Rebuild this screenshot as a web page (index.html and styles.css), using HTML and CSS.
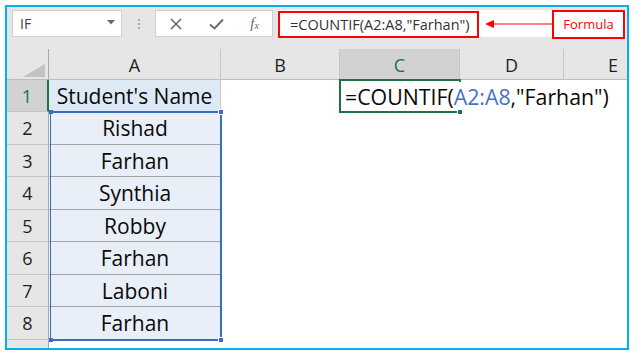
FILE: index.html
```html
<!DOCTYPE html>
<html>
<head>
<meta charset="utf-8">
<link rel="stylesheet" href="styles.css">
</head>
<body>
<div class="frame">
  <div class="toolbar">
    <div class="namebox">
      <span class="nb-text">IF</span>
      <svg class="nb-caret" width="8" height="5" viewBox="0 0 8 5"><path d="M0 0H8L4 4.5Z" fill="#6a6a6a"/></svg>
    </div>
    <div class="grip"><i></i><i></i><i></i></div>
    <div class="fxbox">
      <svg width="14" height="14" viewBox="0 0 14 14"><path d="M2 2L12 12M12 2L2 12" stroke="#6a6a6a" stroke-width="1.6" fill="none"/></svg>
      <svg width="15" height="12" viewBox="0 0 15 12"><path d="M1 6.5L5.5 10.5L14 1.5" stroke="#6a6a6a" stroke-width="1.9" fill="none"/></svg>
      <span class="fx">f<sub>x</sub></span>
    </div>
    <div class="formula">
      <span class="ftext">=COUNTIF(A2:A8,"Farhan")</span>
      <svg class="arrow" width="73" height="10" viewBox="0 0 73 10"><path d="M14 5H73" stroke="#ff0000" stroke-width="1"/><path d="M6 5L15 1V9Z" fill="#ff0000"/></svg>
      <span class="label">Formula</span>
    </div>
  </div>
  <div class="sheet">
    <div class="corner"><svg width="22" height="13" viewBox="0 0 22 13"><path d="M22 0V13H0Z" fill="#c2c2c2"/></svg></div>
    <div class="ch">A</div>
    <div class="ch">B</div>
    <div class="ch ch-active">C</div>
    <div class="ch">D</div>
    <div class="ch ch-last">E</div>

    <div class="rh rh-active">1</div>
    <div class="ca ca-head">Student's Name</div>
    <div class="ce"></div>
    <div class="ce active-cell"><span class="cell-formula">=COUNTIF(<span class="ref">A2:A8</span>,"Farhan")</span><i class="fill-handle"></i></div>
    <div class="ce"></div>
    <div class="ce"></div>

    <div class="rh">2</div><div class="ca">Rishad</div><div class="ce"></div><div class="ce"></div><div class="ce"></div><div class="ce"></div>
    <div class="rh">3</div><div class="ca">Farhan</div><div class="ce"></div><div class="ce"></div><div class="ce"></div><div class="ce"></div>
    <div class="rh">4</div><div class="ca">Synthia</div><div class="ce"></div><div class="ce"></div><div class="ce"></div><div class="ce"></div>
    <div class="rh">5</div><div class="ca">Robby</div><div class="ce"></div><div class="ce"></div><div class="ce"></div><div class="ce"></div>
    <div class="rh">6</div><div class="ca">Farhan</div><div class="ce"></div><div class="ce"></div><div class="ce"></div><div class="ce"></div>
    <div class="rh">7</div><div class="ca">Laboni</div><div class="ce"></div><div class="ce"></div><div class="ce"></div><div class="ce"></div>
    <div class="rh">8</div><div class="ca">Farhan</div><div class="ce"></div><div class="ce"></div><div class="ce"></div><div class="ce"></div>
    <div class="rh rh-tail"></div><div class="ce"></div><div class="ce"></div><div class="ce"></div><div class="ce"></div><div class="ce"></div>

    <div class="range">
      <i class="h h-tl"></i><i class="h h-tr"></i><i class="h h-bl"></i><i class="h h-br"></i>
    </div>
  </div>
</div>
</body>
</html>
```
FILE: styles.css
```css
* { box-sizing: border-box; }
html, body { margin: 0; padding: 0; background: #ffffff; }
body { font-family: "Open Sans", "Noto Sans", sans-serif; }

.frame {
  margin: 5px 0 0 5px;
  width: 624px;
  height: 345px;
  border: 2px solid #00b0f0;
  display: flex;
  flex-direction: column;
  overflow: hidden;
}

.toolbar {
  height: 42px;
  flex: none;
  background: #e6e6e6;
  display: flex;
  align-items: flex-start;
  padding: 3px 1px 0 5px;
}

.namebox {
  width: 110px;
  height: 27px;
  background: #fff;
  border: 1px solid #d0d0d0;
  display: flex;
  align-items: center;
  justify-content: space-between;
  padding: 0 6px 0 7px;
}
.nb-text { font-size: 14px; color: #444; }
.nb-caret { margin-top: -3px; }

.grip {
  width: 33px;
  height: 27px;
  display: flex;
  flex-direction: column;
  justify-content: center;
  gap: 2px;
  padding-left: 16px;
}
.grip i { display: block; width: 2px; height: 2px; background: #a8a8a8; }

.fxbox {
  width: 118px;
  height: 27px;
  background: #fff;
  border: 1px solid #d0d0d0;
  display: flex;
  align-items: center;
  justify-content: space-around;
}
.fx {
  font-family: "Liberation Serif", serif;
  font-style: italic;
  font-size: 15px;
  color: #6a6a6a;
  line-height: 1;
}
.fx sub { font-size: 10px; vertical-align: -1px; }

.formula {
  flex: 1;
  margin-left: 5px;
  height: 27px;
  background: #fff;
  display: flex;
  align-items: flex-start;
}
.ftext {
  width: 201px;
  height: 27px;
  margin-top: 1px;
  border: 2px solid #ff0000;
  padding-left: 10px;
  font-size: 14.5px;
  line-height: 23px;
  color: #333;
  white-space: nowrap;
}
.arrow { margin-top: 9px; }
.label {
  width: 73px;
  height: 29px;
  border: 2px solid #ff0000;
  color: #ff0000;
  font-size: 13px;
  line-height: 25px;
  text-align: center;
  background: #fff;
}

.sheet {
  flex: 1;
  position: relative;
  display: grid;
  grid-template-columns: 42px 172px 119px 120px 104px 98px;
  grid-template-rows: 31px 32px 33px 32px 33px 32px 33px 32px 33px 1fr;
  background: #fff;
}

.corner {
  background: #e6e6e6;
  border-right: 1px solid #a9a9a9;
  border-bottom: 1px solid #bcbcbc;
  display: flex;
  align-items: flex-end;
  justify-content: flex-end;
  padding: 0 3px 2px 0;
}
.ch {
  background: #e6e6e6;
  border-right: 1px solid #c6c6c6;
  border-bottom: 1px solid #bcbcbc;
  font-size: 18px;
  color: #1e1e1e;
  display: flex;
  align-items: center;
  justify-content: center;
  padding-top: 2px;
}
.ch-last { border-right: none; }
.ch-active {
  background: #d2d2d2;
  color: #217346;
  border-bottom: 1px solid #217346;
}

.rh {
  background: #e6e6e6;
  border-right: 1px solid #a9a9a9;
  border-bottom: 1px solid #c4c4c4;
  font-size: 18px;
  color: #1e1e1e;
  display: flex;
  align-items: center;
  justify-content: center;
}
.rh-active {
  background: #d2d2d2;
  color: #217346;
  border-right: 2px solid #217346;
}
.rh-tail { border-bottom: none; }

.ca {
  background: #e9eff8;
  border-bottom: 1px solid #a2a2a2;
  font-size: 21px;
  color: #0a0a0a;
  display: flex;
  align-items: center;
  justify-content: center;
  white-space: nowrap;
}
.ca-head {
  background: #ddeaf6;
  border-right: 1px solid #c6c6c6;
}

.ce { background: #fff; }

.active-cell {
  margin: -1px;
  border: 2px solid #217346;
  position: relative;
  z-index: 2;
  background: transparent;
  display: flex;
  align-items: center;
  padding-left: 4px;
}
.cell-formula {
  font-size: 21.3px;
  color: #0a0a0a;
  white-space: nowrap;
  background: #fff;
}
.ref { color: #4472c4; }
.fill-handle {
  position: absolute;
  right: -4px;
  bottom: -4px;
  width: 6px;
  height: 6px;
  background: #217346;
  border: 1px solid #fff;
}

.range {
  position: absolute;
  left: 43px;
  top: 62px;
  width: 172px;
  height: 230px;
  border: 2px solid #3a6cc4;
  border-left-width: 1px;
  z-index: 3;
}
.h { position: absolute; background: #3a6cc4; }
.h-tl { left: -2px; top: -3px; width: 4px; height: 4px; }
.h-bl { left: -2px; bottom: -3px; width: 4px; height: 4px; }
.h-tr { right: -4px; top: -4px; width: 6px; height: 6px; border: 1px solid #fff; }
.h-br { right: -4px; bottom: -4px; width: 6px; height: 6px; border: 1px solid #fff; }
```
